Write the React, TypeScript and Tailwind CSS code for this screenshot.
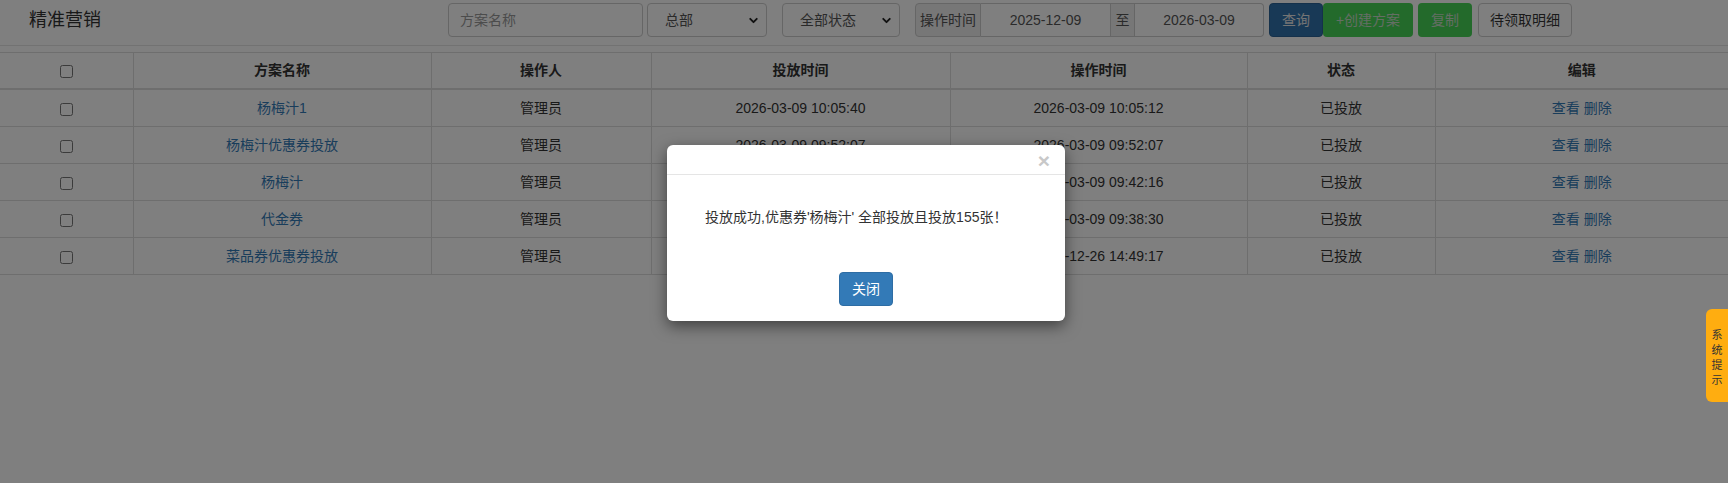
import { ChevronDown } from "lucide-react";

const font = "font-['Liberation_Sans','Noto_Sans_CJK_SC',sans-serif]";

type Row = { name: string; put: string; op: string };

const rows: Row[] = [
  { name: "杨梅汁1", put: "2026-03-09 10:05:40", op: "2026-03-09 10:05:12" },
  { name: "杨梅汁优惠券投放", put: "2026-03-09 09:52:07", op: "2026-03-09 09:52:07" },
  { name: "杨梅汁", put: "2026-03-09 09:42:16", op: "2026-03-09 09:42:16" },
  { name: "代金券", put: "2026-03-09 09:38:30", op: "2026-03-09 09:38:30" },
  { name: "菜品券优惠券投放", put: "2025-12-26 14:49:17", op: "2025-12-26 14:49:17" },
];

const cols = [133, 298, 220, 299, 297, 188, 293];

function FakeSelect({ label, w }: { label: string; w: string }) {
  return (
    <div
      className={`flex h-[34px] items-center justify-between rounded-[4px] border border-[#ccc] bg-white pl-[17px] pr-[6px] text-[14px] text-[#555] ${w}`}
    >
      <span>{label}</span>
      <ChevronDown size={13} strokeWidth={3.5} className="text-[#222]" />
    </div>
  );
}

export default function App() {
  return (
    <div className={`relative h-[483px] w-full overflow-hidden bg-white text-[#333] ${font}`}>
      {/* 顶部工具条 */}
      <div className="flex h-[46px] items-start border-b border-[#e5e5e5]">
        <div className="w-[448px] pl-[29px] pt-[8px] text-[18px] leading-[24px] text-[#333]">精准营销</div>
        <div className="mt-[3px] flex items-center">
          <div className="flex h-[34px] w-[195px] items-center rounded-[4px] border border-[#ccc] px-[11px] text-[14px] text-[#999]">
            方案名称
          </div>
          <div className="ml-[4px]">
            <FakeSelect label="总部" w="w-[120px]" />
          </div>
          <div className="ml-[15px]">
            <FakeSelect label="全部状态" w="w-[118px]" />
          </div>
          <div className="ml-[15px] flex h-[34px] text-[14px]">
            <div className="flex w-[66px] items-center justify-center rounded-l-[4px] border border-[#ccc] bg-[#eee] text-[#555]">
              操作时间
            </div>
            <div className="flex w-[129px] items-center justify-center border-y border-[#ccc] text-[#555]">
              2025-12-09
            </div>
            <div className="flex w-[25px] items-center justify-center border border-[#ccc] bg-[#eee] text-[#555]">
              至
            </div>
            <div className="flex w-[129px] items-center justify-center rounded-r-[4px] border-y border-r border-[#ccc] text-[#555]">
              2026-03-09
            </div>
          </div>
          <button className="ml-[5px] h-[34px] w-[54px] rounded-[4px] border border-[#2a6396] bg-[#3072ac] text-[14px] text-[#e8e8e8]">
            查询
          </button>
          <button className="h-[34px] w-[90px] rounded-[4px] bg-[#47d457] text-[14px] text-[#c8dcc8]">
            +创建方案
          </button>
          <button className="ml-[5px] h-[34px] w-[54px] rounded-[4px] bg-[#47d457] text-[14px] text-[#c8dcc8]">
            复制
          </button>
          <button className="ml-[6px] h-[34px] w-[94px] rounded-[4px] border border-[#ccc] bg-white text-[14px] text-[#333]">
            待领取明细
          </button>
        </div>
      </div>

      {/* 方案列表 */}
      <table className="mt-[6px] w-full table-fixed border-collapse text-[14px] leading-[20px]">
        <colgroup>
          {cols.map((w, i) => (
            <col key={i} style={{ width: w }} />
          ))}
        </colgroup>
        <thead>
          <tr>
            <th className="border-t border-b-2 border-[#ddd] pb-[8px] pt-[7px] text-center">
              <input type="checkbox" className="align-middle" />
            </th>
            {["方案名称", "操作人", "投放时间", "操作时间", "状态", "编辑"].map((h) => (
              <th key={h} className="border-t border-b-2 border-l border-[#ddd] pb-[8px] pt-[7px] text-center font-bold">
                {h}
              </th>
            ))}
          </tr>
        </thead>
        <tbody>
          {rows.map((r) => (
            <tr key={r.name}>
              <td className="border-b border-[#ddd] py-2 text-center">
                <input type="checkbox" className="align-middle" />
              </td>
              <td className="border-b border-l border-[#ddd] py-2 text-center text-[#337ab7]">{r.name}</td>
              <td className="border-b border-l border-[#ddd] py-2 text-center">管理员</td>
              <td className="border-b border-l border-[#ddd] py-2 text-center">{r.put}</td>
              <td className="border-b border-l border-[#ddd] py-2 text-center">{r.op}</td>
              <td className="border-b border-l border-[#ddd] py-2 text-center">已投放</td>
              <td className="border-b border-l border-[#ddd] py-2 text-center text-[#337ab7]">查看 删除</td>
            </tr>
          ))}
        </tbody>
      </table>

      {/* 遮罩 */}
      <div className="absolute inset-0 bg-black/50" />

      {/* 提示框 */}
      <div className="absolute left-[667px] top-[145px] w-[398px] rounded-[6px] bg-white shadow-[0_5px_15px_rgba(0,0,0,0.5)]">
        <div className="relative h-[30px] border-b border-[#e5e5e5]">
          <span className="absolute right-[15px] top-[5px] text-[21px] font-bold leading-[21px] text-[#c8c8c8]">×</span>
        </div>
        <div className="px-[38px] pb-[30px] pt-[32px] text-[14px] leading-[20px] text-[#333]">
          投放成功,优惠券'杨梅汁' 全部投放且投放155张！
        </div>
        <div className="flex justify-center pb-[15px] pt-[15px]">
          <button className="h-[34px] w-[54px] rounded-[4px] border border-[#2e6da4] bg-[#337ab7] text-[14px] text-white">
            关闭
          </button>
        </div>
      </div>

      {/* 系统提示 */}
      <div className="absolute right-0 top-[309px] flex h-[93px] w-[22px] flex-col items-center rounded-l-[6px] bg-[#ffad10] pt-[19px] text-[11px] leading-[15px] text-[#333]">
        <span>系</span>
        <span>统</span>
        <span>提</span>
        <span>示</span>
      </div>
    </div>
  );
}
